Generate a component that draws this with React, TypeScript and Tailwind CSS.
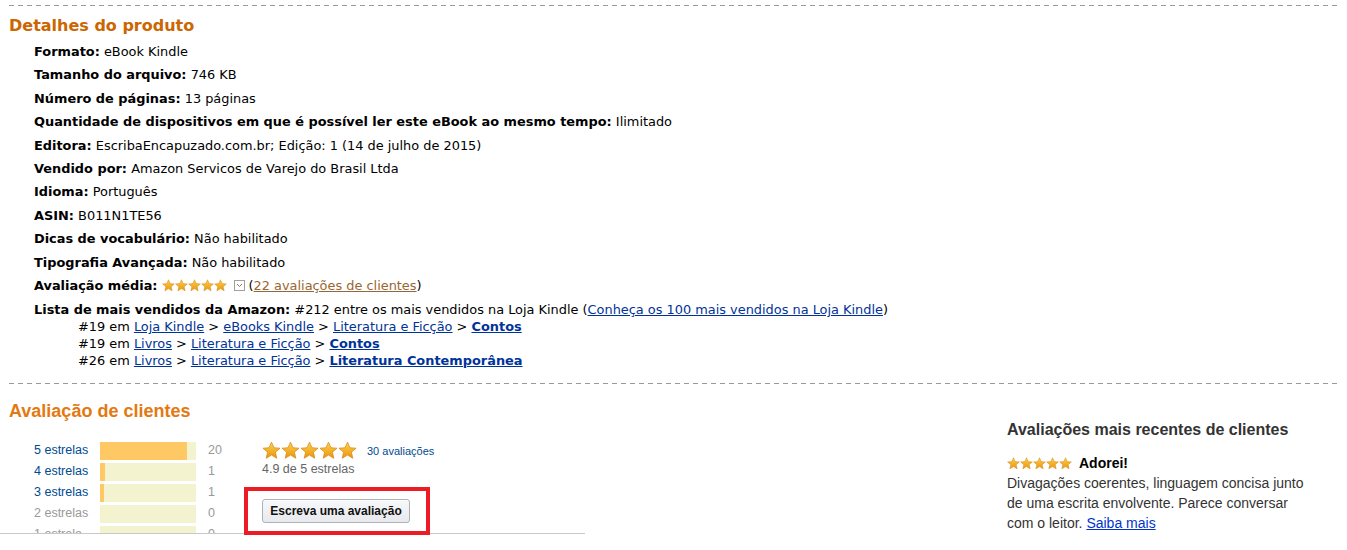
import React from 'react';

const Star = ({ size, id }: { size: number; id: string }) => (
  <svg width={size} height={size} viewBox="0 0 20 20" className="inline-block">
    <defs>
      <linearGradient id={id} x1="0" y1="0" x2="0" y2="1">
        <stop offset="0%" stopColor="#ffd24d" />
        <stop offset="100%" stopColor="#e8940c" />
      </linearGradient>
    </defs>
    <path
      d="M10 1.2 L12.6 7.1 L19 7.6 L14.1 11.8 L15.6 18.2 L10 14.8 L4.4 18.2 L5.9 11.8 L1 7.6 L7.4 7.1 Z"
      fill={`url(#${id})`}
      stroke="#d98a1a"
      strokeWidth="0.8"
      strokeLinejoin="round"
    />
  </svg>
);

const Stars = ({ size, prefix }: { size: number; prefix: string }) => (
  <span className="inline-flex">
    {[0, 1, 2, 3, 4].map((i) => (
      <Star key={i} size={size} id={`${prefix}${i}`} />
    ))}
  </span>
);

const Dashed = () => (
  <div className="h-px ml-[9px] mr-[6px] bg-[linear-gradient(to_right,#9a9a9a_5px,transparent_5px)] bg-[length:9px_1px]" />
);

const details: [string, string][] = [
  ['Formato:', 'eBook Kindle'],
  ['Tamanho do arquivo:', '746 KB'],
  ['Número de páginas:', '13 páginas'],
  ['Quantidade de dispositivos em que é possível ler este eBook ao mesmo tempo:', 'Ilimitado'],
  ['Editora:', 'EscribaEncapuzado.com.br; Edição: 1 (14 de julho de 2015)'],
  ['Vendido por:', 'Amazon Servicos de Varejo do Brasil Ltda'],
  ['Idioma:', 'Português'],
  ['ASIN:', 'B011N1TE56'],
  ['Dicas de vocabulário:', 'Não habilitado'],
  ['Tipografia Avançada:', 'Não habilitado'],
];

const histogram = [
  { label: '5 estrelas', count: 20, pct: 91 },
  { label: '4 estrelas', count: 1, pct: 5 },
  { label: '3 estrelas', count: 1, pct: 4 },
  { label: '2 estrelas', count: 0, pct: 0 },
  { label: '1 estrela', count: 0, pct: 0 },
];

const link = 'text-[#003399] underline';

export default function App() {
  return (
    <div className="relative w-[1347px] h-[550px] overflow-hidden bg-white pt-[5px]">
      <Dashed />

      {/* Detalhes do produto */}
      <h2 className="ml-[9px] mt-[9px] font-['DejaVu_Sans',Verdana,sans-serif] font-bold text-[16px] leading-[22px] text-[#cc6600]">
        Detalhes do produto
      </h2>
      <ul className="ml-[34px] mt-[3px] font-['DejaVu_Sans',Verdana,sans-serif] text-[12.9px] text-black">
        {details.map(([k, v]) => (
          <li key={k} className="h-[23.4px] leading-[23.4px]">
            <b>{k}</b> {v}
          </li>
        ))}
        <li className="h-[23.4px] leading-[23.4px] flex items-center gap-[4px]">
          <b>Avaliação média:</b>
          <Stars size={13} prefix="sm" />
          <span className="inline-flex items-center justify-center w-[11px] h-[11px] border border-[#a0a0a0] ml-[3px]">
            <svg width="7" height="5" viewBox="0 0 7 5">
              <path d="M1 1 L3.5 3.5 L6 1" fill="none" stroke="#777" strokeWidth="1" />
            </svg>
          </span>
          <span>
            (<span className="text-[#996633] underline">22 avaliações de clientes</span>)
          </span>
        </li>
        <li className="leading-[17px] pt-[4px]">
          <b>Lista de mais vendidos da Amazon:</b> #212 entre os mais vendidos na Loja Kindle (
          <span className={link}>Conheça os 100 mais vendidos na Loja Kindle</span>)
          <ul className="ml-[44px]">
            <li>
              #19 em <span className={link}>Loja Kindle</span> &gt; <span className={link}>eBooks Kindle</span> &gt;{' '}
              <span className={link}>Literatura e Ficção</span> &gt; <b className={link}>Contos</b>
            </li>
            <li>
              #19 em <span className={link}>Livros</span> &gt; <span className={link}>Literatura e Ficção</span> &gt;{' '}
              <b className={link}>Contos</b>
            </li>
            <li>
              #26 em <span className={link}>Livros</span> &gt; <span className={link}>Literatura e Ficção</span> &gt;{' '}
              <b className={link}>Literatura Contemporânea</b>
            </li>
          </ul>
        </li>
      </ul>

      <div className="mt-[14px]">
        <Dashed />
      </div>

      {/* Avaliação de clientes */}
      <div className="flex font-['Liberation_Sans',Arial,sans-serif]">
        <div className="w-[998px]">
          <h2 className="ml-[9px] mt-[16px] font-bold text-[18px] leading-[22px] text-[#e47911]">Avaliação de clientes</h2>
          <div className="flex mt-[18px]">
            <div className="ml-[34px] w-[228px]">
              {histogram.map((r) => (
                <div key={r.label} className="flex items-center h-[21px] text-[12.5px]">
                  <span className={`w-[66px] ${r.count > 0 ? 'text-[#004b91]' : 'text-[#999]'}`}>{r.label}</span>
                  <div className="w-[96px] h-[18px] bg-[#f4f3d0]">
                    <div className="h-full bg-[#fec864]" style={{ width: `${r.pct}%` }} />
                  </div>
                  <span className="ml-[12px] text-[#999]">{r.count}</span>
                </div>
              ))}
            </div>
            <div className="pt-[1px]">
              <div className="flex items-center gap-[10px]">
                <Stars size={19} prefix="lg" />
                <span className="text-[11px] text-[#004b91]">30 avaliações</span>
              </div>
              <div className="text-[12.5px] text-[#666] leading-[15px] mt-[2px]">4.9 de 5 estrelas</div>
              <button className="mt-[22px] w-[148px] h-[24px] rounded-[3px] border border-[#adb1b8] bg-[linear-gradient(#f7f8fa,#e7e9ec)] text-[12px] font-bold text-[#111] shadow-[0_1px_0_rgba(255,255,255,0.6)_inset]">
                Escreva uma avaliação
              </button>
            </div>
          </div>
        </div>

        <div className="ml-[9px] mt-[36px] w-[305px] text-[#333]">
          <h3 className="font-bold text-[16px] leading-[20px]">Avaliações mais recentes de clientes</h3>
          <div className="flex items-center gap-[7px] mt-[13px] h-[20px]">
            <Stars size={13} prefix="rv" />
            <b className="text-[14px] text-black">Adorei!</b>
          </div>
          <p className="text-[14px] leading-[20px]">
            Divagações coerentes, linguagem concisa junto de uma escrita envolvente. Parece conversar com o leitor.{' '}
            <span className="text-[#0033cc] underline">Saiba mais</span>
          </p>
        </div>
      </div>

      {/* faixa branca cortando a página */}
      <div className="absolute left-0 top-[533px] w-[585px] h-[20px] bg-white border-t border-[#c8c8c8]" />
      {/* destaque vermelho */}
      <div className="absolute left-[244px] top-[487px] w-[186px] h-[48px] border-4 border-[#ed1c24]" />
    </div>
  );
}
